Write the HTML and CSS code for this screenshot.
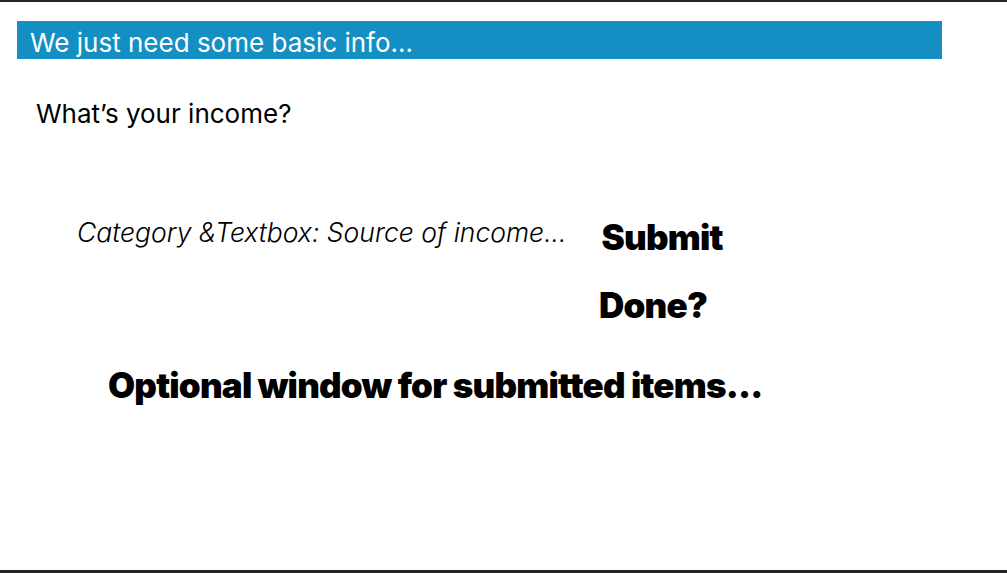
FILE: index.html
```html
<!DOCTYPE html>
<html>
<head>
<meta charset="utf-8">
<link rel="stylesheet" href="styles.css">
</head>
<body>
<div class="frame">
  <div class="banner">We just need some basic info...</div>
  <p class="question">What’s your income?</p>
  <div class="entry-row">
    <span class="entry">Category &amp;Textbox: Source of income...</span>
    <span class="action submit">Submit</span>
  </div>
  <div class="done-row">
    <span class="action done">Done?</span>
  </div>
  <div class="optional">Optional window for submitted items...</div>
</div>
</body>
</html>
```
FILE: styles.css
```css
html, body {
  margin: 0;
  padding: 0;
  background: #ffffff;
}
.frame {
  box-sizing: border-box;
  width: 1007px;
  height: 573px;
  border-top: 2px solid #232323;
  border-bottom: 3px solid #232323;
  font-family: Inter, "Noto Sans", sans-serif;
  color: #000;
  padding-top: 19px;
  overflow: hidden;
}
.banner {
  margin-left: 17px;
  width: 925px;
  height: 38px;
  background: #148fc3;
  color: #fff;
  font-size: 26px;
  line-height: 43px;
  padding-left: 13px;
  box-sizing: border-box;
  overflow: hidden;
  white-space: nowrap;
}
.question {
  margin: 39px 0 0 36px;
  font-size: 26px;
  line-height: 32px;
}
.entry-row {
  display: flex;
  align-items: flex-start;
  margin: 86px 0 0 77px;
  gap: 35px;
}
.entry {
  font-style: italic;
  font-size: 26.5px;
  font-weight: 300;
}
.action {
  font-weight: 900;
  font-size: 35px;
  letter-spacing: -0.8px;
}
.done-row {
  margin: 26px 0 0 599px;
}
.optional {
  margin: 38px 0 0 108px;
  font-weight: 900;
  font-size: 35px;
  letter-spacing: -0.8px;
}
```
